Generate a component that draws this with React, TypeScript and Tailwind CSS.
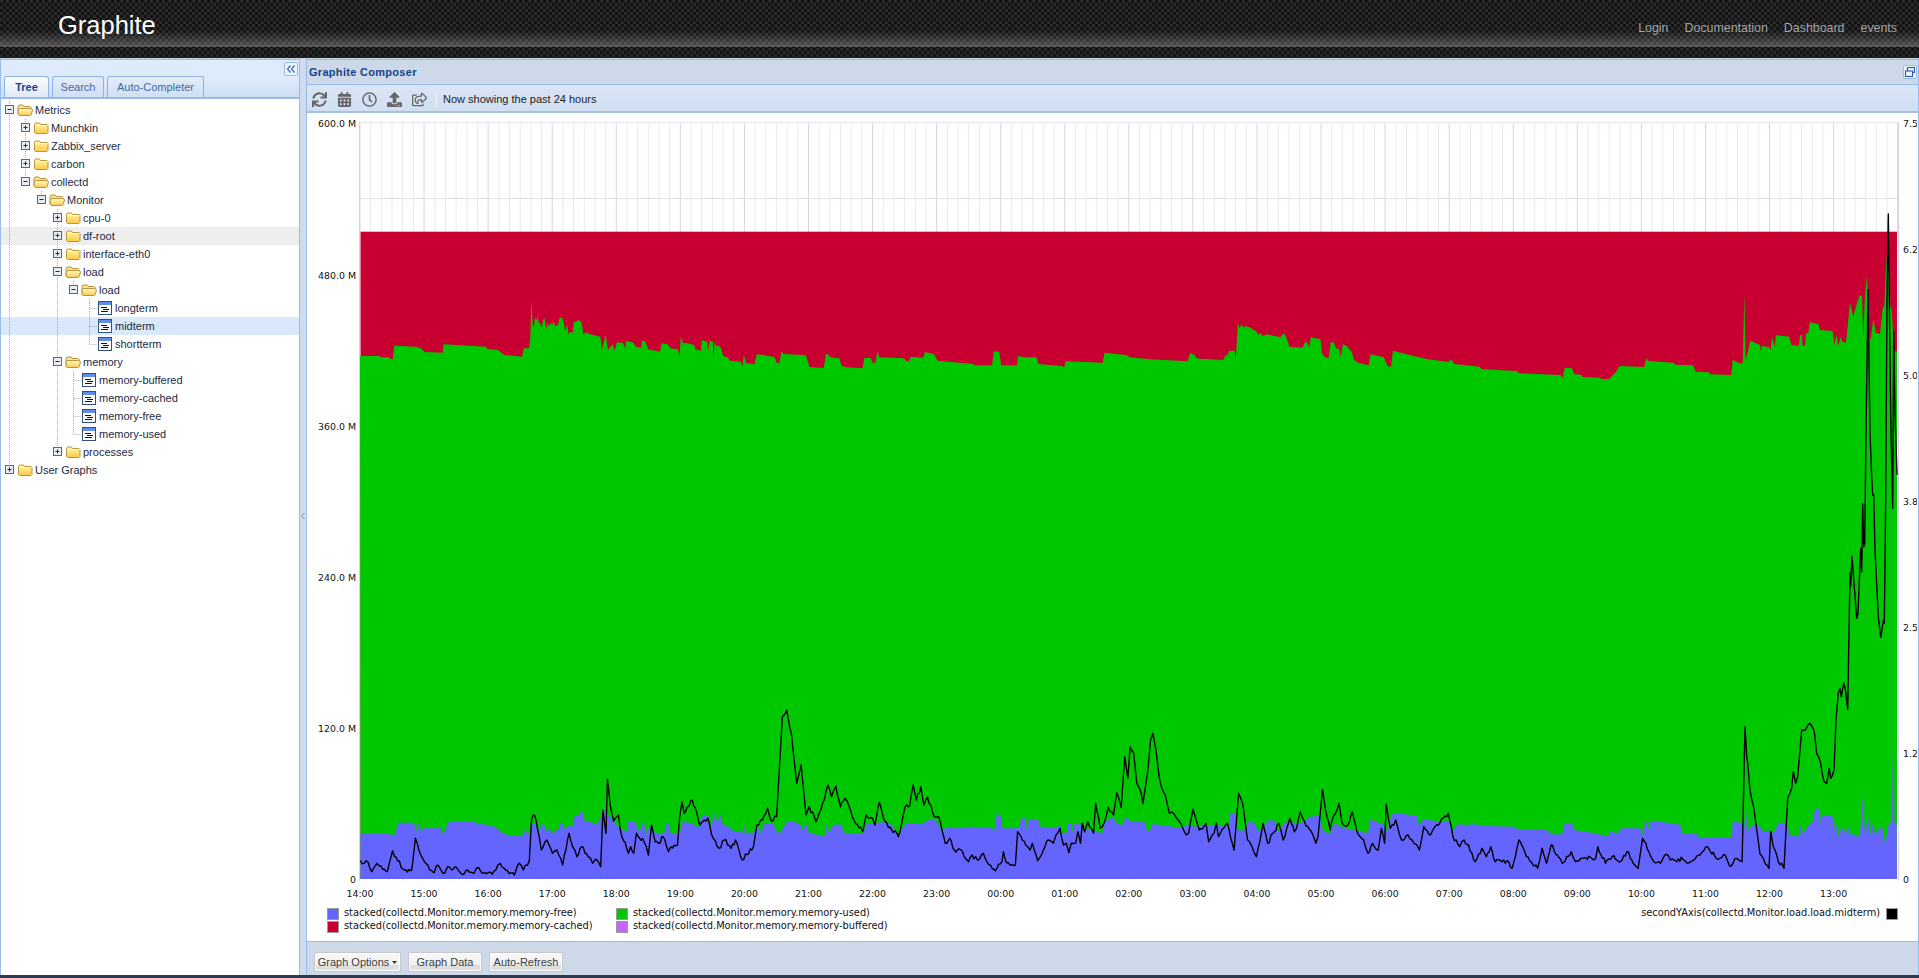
import React from "react";
import { FaSync, FaCalendarAlt, FaRegClock, FaUpload, FaRegShareSquare } from "react-icons/fa";

const conv = (a: number[], x0: number, sx: number, y0: number) => {
  const out: string[] = [];
  for (let i = 0; i < a.length; i += 2) out.push(`${(x0 + a[i] / sx).toFixed(1)},${(y0 + a[i + 1] / 3).toFixed(1)}`);
  return out;
};

const jag = (pts: string[]) => {
  const out: string[] = [];
  let n = 0;
  const p = pts.map((s) => s.split(",").map(Number));
  for (let i = 0; i < p.length - 1; i++) {
    const [x0, y0] = p[i];
    const [x1, y1] = p[i + 1];
    out.push(`${x0},${y0}`);
    const dx = x1 - x0;
    const steps = Math.floor(dx / 1.5);
    const steep = Math.abs(y1 - y0) / Math.max(dx, 0.1) > 6;
    if (steep) continue;
    for (let s = 1; s < steps; s++) {
      n++;
      const r = Math.sin(n * 12.9898) * 43758.5453;
      const f = r - Math.floor(r);
      const x = x0 + (dx * s) / steps;
      const y = y0 + ((y1 - y0) * s) / steps + (f - 0.5) * 4.6;
      out.push(`${x.toFixed(1)},${y.toFixed(1)}`);
    }
  }
  const last = p[p.length - 1];
  out.push(`${last[0]},${last[1]}`);
  return out;
};

const green11 = [12,78,70,78,75,82,100,82,104,87,110,87,115,47,178,50,195,55,205,66,260,68,263,43,390,50,395,57,425,60,445,75,498,80,503,55];
const green9 = [65,205,68,170,70,60,73,130,76,145,78,115,82,120,84,108,87,130,90,130,93,145,97,118,100,115,104,148,107,128,110,140,113,128,117,135,120,122,123,138,130,135,134,112,140,115,147,155,150,130,153,162,158,155,163,158,165,125,170,125,177,120,183,128,187,165,192,157,200,162,225,170,228,210,237,165,242,210,252,193,257,212,262,187,275,188,281,205,282,183,297,187,305,200,316,203,318,182,325,183,332,208,358,215,362,190,375,193,382,205,398,208,402,228,405,170,410,188,420,190,435,195,438,208,450,212,452,180,465,187,466,215,470,182,477,185,478,240,481,185,485,200,488,195,495,205,500,228,510,232,515,242,540,245,543,260,546,225,552,250,570,253,575,223,590,225,615,232,620,248,626,250,630,213,635,222,685,226,690,245,693,261,725,264,730,222,736,224,740,232,760,235,765,257,775,262,812,265,816,234,830,234,835,248,841,250,845,215,850,232,905,235,910,243,916,243,920,230,948,233,952,216,972,222,980,242,1060,252,1063,256,1102,256,1106,214,1118,215,1123,256,1158,256,1160,228,1175,232,1202,232,1206,252,1258,258,1264,262,1267,244,1350,248,1354,218,1405,226,1410,232,1455,238,1540,244,1546,220,1555,224,1560,234];
const green10 = [0,236,52,240,57,226,62,226,65,212,78,212,80,245,85,125,88,145,93,135,98,142,103,138,115,145,127,155,130,165,135,158,140,168,150,163,180,172,185,163,190,163,197,185,200,200,230,203,235,187,240,187,245,203,248,172,270,178,273,220,280,232,288,234,293,187,299,187,305,205,312,208,315,232,320,193,328,197,340,215,345,240,355,248,378,256,382,223,412,232,420,258,428,260,432,212,470,225,510,238,558,246,562,238,570,252,625,260,632,268,710,273,715,280,808,285,813,295,817,263,833,265,838,282,855,285,857,291,895,293,900,297,917,297,925,285,932,275,940,258,995,261,1000,235,1005,243,1060,248,1065,254,1105,256,1110,275,1140,277,1143,283,1190,285,1193,240];
const green12 = [0,490,8,490,13,285,17,480,25,450,30,422,60,435,63,455,66,437,88,442,92,450,96,410,104,440,108,406,148,410,154,435,177,437,180,405,185,405,188,437,195,437,198,400,205,400,209,367,235,372,240,390,278,393,283,435,289,405,295,437,302,410,307,425,318,428,330,308,340,350,348,320,358,287,366,287,370,410,375,285,381,228,386,400,392,420,400,358,408,398,420,402,428,325,433,318,438,205,445,100,450,315,455,330,462,452,471,455];
const greenTop = [...conv(green11, 356, 3, 330), ...conv(green9, 500, 2.24, 280), ...conv(green10, 1200, 2.24, 280), ...conv(green12, 1740, 3, 200)];

const blue7 = [0,402,30,398,65,402,75,407,82,385,85,368,120,368,124,400,128,372,133,372,135,398,140,385,180,385,185,405,195,370,200,366,258,366,262,375,268,371,285,375,300,380,320,400,335,407,365,408,368,385,375,405,380,385,385,370,395,375,400,395,405,375,410,368,415,395,422,385,430,400,445,385,450,362,458,390,465,375,475,380,480,345,490,345,495,328,503,365,515,365,530,375,545,330,580,385,597,395,600,362,615,365,625,400,633,360,640,400,650,375,660,400,680,402,685,372,690,372,695,402,715,400,722,365,745,370,755,385,768,342,780,350,785,385,792,340,800,370,805,340,812,375,825,380,835,393,858,398,860,375,863,398,880,398,890,375,895,402,905,372,925,372,932,395,940,400,955,365,975,367,985,375,990,390,997,368,1005,400,1040,408,1043,375,1050,400,1058,375,1075,373,1085,400,1125,400,1135,370,1175,367,1190,375,1205,405,1222,370,1255,373,1280,355,1290,365,1305,395,1310,382,1345,382,1365,380,1415,382,1418,408,1425,342,1433,345,1438,385,1475,385,1480,355,1490,355,1492,390,1497,358,1518,360,1522,380,1560,382];
const blue8 = [0,375,5,398,15,398,17,372,25,372,28,398,32,372,45,372,50,385,95,400,100,365,120,352,128,372,140,375,146,352,160,365,190,367,195,392,200,397,207,372,240,378,270,383,295,372,300,385,310,375,355,375,378,380,380,340,392,342,395,385,410,395,422,365,435,368,445,395,468,360,480,362,490,395,505,365,540,370,560,350,580,347,590,395,605,400,615,370,630,382,665,393,690,400,695,358,715,370,725,370,730,398,745,340,770,342,800,348,803,375,815,357,850,365,870,362,880,395,890,372,910,375,925,373,960,378,1020,380,1025,390,1085,390,1095,392,1100,403,1125,403,1130,372,1148,372,1150,390,1180,395,1205,403,1230,408,1232,395,1250,400,1258,385,1300,385,1305,405,1312,358,1320,392,1322,365,1345,365,1390,375,1392,400,1425,400,1430,412,1505,412];
const blue6 = [518,362,548,372,552,392,558,332,565,392,580,372,600,378,605,392,635,392,640,402,655,368,680,368,690,405,715,410,722,375,728,403,745,378,750,370,760,365,765,325,778,327,782,370,787,345,820,350,825,400,830,370,835,410,845,380,858,405,862,370,870,405,880,400,888,410,900,405,908,290,915,405,925,350,930,405,938,370,945,405,965,375,975,432,987,370,995,365,1000,80,1003,365,1010,375];
const blueTop = [...conv(blue7, 360.5, 2.24, 700), ...conv(blue8, 1060, 2.24, 700), ...conv(blue6, 1560, 3, 700)];

const black7 = [0,482,8,490,13,482,25,515,37,490,50,508,60,515,66,482,72,452,80,472,98,510,115,510,123,415,135,465,155,510,165,518,170,497,185,520,195,500,205,510,215,502,225,520,240,510,250,518,265,503,275,520,295,523,303,510,313,490,325,510,345,525,355,490,365,510,378,483,383,360,390,345,397,390,405,450,417,420,430,460,440,450,453,495,460,450,467,400,475,440,485,470,495,440,510,470,520,490,530,480,538,500,543,330,550,400,553,238,560,320,567,363,578,345,582,390,600,460,605,440,612,460,618,400,635,425,645,465,652,375,660,425,668,430,678,410,690,455,695,440,710,435,715,350,720,305,725,340,732,320,743,300,760,375,770,360,778,355,790,415,803,445,815,420,830,445,840,420,855,480,880,440,888,375,900,360,912,325,920,362,932,350,945,50,955,30,965,100,977,250,987,195,998,345,1005,320,1020,365,1035,310,1047,255,1055,290,1065,258,1075,320,1085,295,1095,320,1105,360,1125,395,1132,345,1147,355,1152,375,1162,307,1175,365,1205,410,1220,320,1230,318,1238,255,1245,300,1255,260,1262,315,1270,292,1285,350,1295,350,1310,430,1320,415,1330,450,1345,450,1362,485,1370,465,1382,480,1395,460,1405,490,1422,512,1437,485,1440,455,1447,488,1467,495,1472,395,1490,435,1500,450,1505,430,1517,482,1530,450,1540,420,1552,430,1558,405];
const black8 = [0,385,8,435,14,430,20,458,25,430,35,430,40,395,46,430,50,370,55,395,62,365,75,400,80,310,90,385,95,380,108,322,120,345,127,278,137,322,145,170,152,235,157,140,165,160,172,250,178,265,186,310,197,210,203,120,208,100,215,150,222,230,240,310,245,340,255,340,265,360,275,385,283,405,288,400,298,328,305,360,312,390,322,380,327,370,333,425,345,400,350,370,355,410,375,370,390,450,400,280,410,315,420,420,430,440,440,470,455,370,465,430,480,395,490,370,500,420,515,355,525,395,530,385,538,335,548,365,565,400,573,430,578,410,588,270,598,350,605,390,612,350,625,310,632,370,645,375,655,335,665,395,680,420,690,460,700,430,713,450,720,385,727,430,731,312,740,385,752,360,765,420,780,405,805,450,815,380,830,405,840,380,870,340,880,410,895,440,905,420,915,435,930,485,945,445,955,470,965,440,975,485,990,485,1005,485,1013,505,1028,420,1045,470,1070,505,1080,445,1090,490,1100,435,1125,490,1145,455,1155,485,1170,475,1200,475,1205,440,1222,490,1237,470,1255,485,1270,455,1295,505,1305,415,1330,485,1345,490,1355,465,1375,480,1395,478,1405,490,1430,465,1450,440,1470,475,1490,465,1500,498,1515,475,1528,485];
const black6 = [555,80,560,170,563,190,570,270,580,315,585,350,600,462,610,475,627,505,632,395,640,440,645,450,655,485,665,490,672,505,683,295,695,265,700,215,707,250,713,230,725,90,735,90,750,70,763,95,770,160,782,190,792,245,800,250,808,205,812,235,822,210,828,60];
const black12 = [295,1480,300,1465,304,1490,311,1450,316,1465,323,1528,330,1120,332,1160,336,1068,343,1160,350,1255,354,1240,362,1045,365,1115,368,912,371,1040,374,1030,378,700,384,270,390,700,395,830,398,885,401,885,405,1050,415,1250,422,1312,430,1262,433,1270,437,900,441,300,445,42,449,400,453,700,458,925,461,395,465,640,471,825];
const blackLine = jag([...conv(black7, 360.5, 2.24, 700), ...conv(black8, 1060, 2.24, 700), ...conv(black6, 1560, 3, 700), ...conv(black12, 1740, 3, 200)]);

const HOUR = 64.07;
const hours = ["14:00","15:00","16:00","17:00","18:00","19:00","20:00","21:00","22:00","23:00","00:00","01:00","02:00","03:00","04:00","05:00","06:00","07:00","08:00","09:00","10:00","11:00","12:00","13:00"];
const leftLabels: [string, number][] = [["600.0 M",123],["480.0 M",275],["360.0 M",426],["240.0 M",577],["120.0 M",728],["0",879]];
const rightLabels: [string, number][] = [["7.5",123],["6.2",249],["5.0",375],["3.8",501],["2.5",627],["1.2",753],["0",879]];

function Chart() {
  const minors: number[] = [];
  for (let i = 0; i <= 144; i++) minors.push(360 + (i * HOUR) / 6);
  return (
    <svg width={1610} height={794} viewBox="307 113 1610 794" className="block shrink-0">
      {minors.map((x, i) => (
        <line key={i} x1={x} x2={x} y1={122} y2={232} stroke={i % 6 === 0 ? "#e2cfe2" : "#eee8ee"} strokeWidth={1} />
      ))}
      <line x1={360} x2={1898} y1={122.5} y2={122.5} stroke="#f2e6f2" strokeWidth={1.5} />
      <line x1={360} x2={1898} y1={198.5} y2={198.5} stroke="#e6dde6" />
      <line x1={359.5} x2={359.5} y1={122} y2={880} stroke="#e0cce0" />
      <line x1={1898.5} x2={1898.5} y1={122} y2={880} stroke="#e0cce0" />
      <rect x={360.5} y={231.7} width={1536.5} height={647.3} fill="#c80032" />
      <polygon points={[ "360.5,879", ...greenTop, "1897,879"].join(" ")} fill="#00c800" />
      <polygon points={[ "360.5,879", ...blueTop, "1897,879"].join(" ")} fill="#6464ff" />
      <polyline points={blackLine.join(" ")} fill="none" stroke="#000" strokeWidth={1.4} strokeLinejoin="round" />
      <g fontFamily="'DejaVu Sans',sans-serif" fontSize={9.4} fill="#111">
        {leftLabels.map(([t, y]) => (
          <text key={t} x={356} y={y + 3.5} textAnchor="end">{t}</text>
        ))}
        {rightLabels.map(([t, y]) => (
          <text key={t} x={1903} y={y + 3.5}>{t}</text>
        ))}
        {hours.map((t, i) => (
          <text key={t} x={360 + i * HOUR} y={896.5} textAnchor="middle">{t}</text>
        ))}
      </g>
    </svg>
  );
}

const Legend = ({ color, text, right }: { color: string; text: string; right?: boolean }) => (
  <div className={`flex items-center h-[13px] ${right ? "flex-row-reverse" : ""}`}>
    <span className="w-3 h-3 border border-[#999] shrink-0" style={{ background: color }} />
    <span className={`text-[9.8px] text-[#111] whitespace-nowrap [font-family:'DejaVu_Sans',sans-serif] ${right ? "mr-[6px]" : "ml-[5px]"}`}>{text}</span>
  </div>
);

function Folder({ open }: { open?: boolean }) {
  return open ? (
    <svg width={16} height={16} viewBox="0 0 16 16" className="shrink-0">
      <defs>
        <linearGradient id="fo" x1="0" y1="0" x2="0" y2="1">
          <stop offset="0" stopColor="#fff8c8" />
          <stop offset="1" stopColor="#f9cb50" />
        </linearGradient>
      </defs>
      <path d="M1 12V4.5L2 3h4l1 1.5h6l1 1V8" fill="#fbe593" stroke="#b8953e" strokeWidth={1} />
      <path d="M1.2 8.2Q1.2 6.5 3 6.5h9.5Q15.5 6.5 15.5 8l-1.2 4.3q-.4 1.2-1.8 1.2H3q-1.8 0-1.8-1.8z" fill="url(#fo)" stroke="#b8953e" strokeWidth={1} strokeLinejoin="round" />
    </svg>
  ) : (
    <svg width={16} height={16} viewBox="0 0 16 16" className="shrink-0">
      <defs>
        <linearGradient id="fc" x1="0" y1="0" x2="0" y2="1">
          <stop offset="0" stopColor="#fff4a8" />
          <stop offset="1" stopColor="#fbcb48" />
        </linearGradient>
      </defs>
      <path d="M1.5 4.5L2.5 3h4l1 1.5H14l1 1v7l-1 1H2.5l-1-1z" fill="url(#fc)" stroke="#b8953e" strokeWidth={1} strokeLinejoin="round" />
      <path d="M2.5 5.5h11.5" stroke="#fffbe0" strokeWidth={1} />
    </svg>
  );
}

const Leaf = () => (
  <svg width={16} height={16} viewBox="0 0 16 16" className="shrink-0">
    <rect x={1.5} y={1.5} width={13} height={13} fill="#fff" stroke="#34507e" />
    <rect x={2} y={2} width={12} height={3} fill="#5f8fe8" />
    <path d="M4 7.5h6M6 9.5h6M4 11.5h7" stroke="#111" strokeWidth={1} />
  </svg>
);

function Elbow({ kind, exp }: { kind: "m" | "e"; exp?: "+" | "-" }) {
  return (
    <svg width={16} height={18} viewBox="0 0 16 18" className="shrink-0">
      <g stroke="#aaa" strokeDasharray="1 1" fill="none">
        <line x1={8.5} x2={8.5} y1={0} y2={kind === "m" ? 18 : 9} />
        {!exp && <line x1={8.5} x2={16} y1={9.5} y2={9.5} />}
      </g>
      {exp && (
        <>
          <rect x={4.5} y={4.5} width={8} height={8} fill="#e6edf5" stroke="#4d6a8e" />
          <path d={exp === "+" ? "M6.5 8.5h4M8.5 6.5v4" : "M6.5 8.5h4"} stroke="#1c2f4c" strokeWidth={1} />
        </>
      )}
    </svg>
  );
}

const Guide = ({ on }: { on: boolean }) => (
  <svg width={16} height={18} viewBox="0 0 16 18" className="shrink-0">
    {on && <line x1={8.5} x2={8.5} y1={0} y2={18} stroke="#aaa" strokeDasharray="1 1" />}
  </svg>
);

type Row = { t: string; p: string; k: "m" | "e"; x?: "+" | "-"; i: "c" | "o" | "l"; bg?: string };
const rows: Row[] = [
  { t: "Metrics", p: "", k: "m", x: "-", i: "o" },
  { t: "Munchkin", p: "T", k: "m", x: "+", i: "c" },
  { t: "Zabbix_server", p: "T", k: "m", x: "+", i: "c" },
  { t: "carbon", p: "T", k: "m", x: "+", i: "c" },
  { t: "collectd", p: "T", k: "e", x: "-", i: "o" },
  { t: "Monitor", p: "TF", k: "e", x: "-", i: "o" },
  { t: "cpu-0", p: "TFF", k: "m", x: "+", i: "c" },
  { t: "df-root", p: "TFF", k: "m", x: "+", i: "c", bg: "bg-[#eeeeee]" },
  { t: "interface-eth0", p: "TFF", k: "m", x: "+", i: "c" },
  { t: "load", p: "TFF", k: "m", x: "-", i: "o" },
  { t: "load", p: "TFFT", k: "e", x: "-", i: "o" },
  { t: "longterm", p: "TFFTF", k: "m", i: "l" },
  { t: "midterm", p: "TFFTF", k: "m", i: "l", bg: "bg-[#d9e8fb]" },
  { t: "shortterm", p: "TFFTF", k: "e", i: "l" },
  { t: "memory", p: "TFF", k: "m", x: "-", i: "o" },
  { t: "memory-buffered", p: "TFFT", k: "m", i: "l" },
  { t: "memory-cached", p: "TFFT", k: "m", i: "l" },
  { t: "memory-free", p: "TFFT", k: "m", i: "l" },
  { t: "memory-used", p: "TFFT", k: "e", i: "l" },
  { t: "processes", p: "TFF", k: "e", x: "+", i: "c" },
  { t: "User Graphs", p: "", k: "e", x: "+", i: "c" },
];

const Tab = ({ label, active, w }: { label: string; active?: boolean; w: string }) => (
  <div
    className={`${w} h-[21px] flex items-center justify-center rounded-t-[3px] border border-b-0 border-[#8db2e3] text-[11px] ${
      active ? "font-bold text-[#15428b] bg-gradient-to-b from-[#fbfdff] to-[#dfe9f7]" : "text-[#416aa3] bg-gradient-to-b from-[#e4edf9] to-[#cfdff3]"
    }`}
  >
    {label}
  </div>
);

const Btn = ({ children, w }: { children: React.ReactNode; w: string }) => (
  <div className={`${w} h-[20px] flex items-center justify-center gap-[3px] rounded-[2px] border border-[#c4c8cc] text-[11px] text-[#3c3c3c] bg-[linear-gradient(to_bottom,#f7f7f7_0,#f2f2f2_65%,#dcdcdc_65%,#e2e2e2_100%)] shadow-[inset_0_0_0_1px_#fff]`}>
    {children}
  </div>
);

const ToolIcon = ({ children, w }: { children: React.ReactNode; w: string }) => (
  <div className={`${w} flex justify-center text-[#666] text-[15px]`}>{children}</div>
);

export default function App() {
  return (
    <div className="w-[1919px] h-[978px] overflow-hidden flex flex-col bg-[#2b3a4e] [font-family:'Liberation_Sans',Arial,sans-serif]">
      <header className="h-[58px] shrink-0 flex items-start justify-between [background-image:linear-gradient(to_bottom,transparent_0,transparent_30px,rgba(255,255,255,0.05)_34px,rgba(255,255,255,0.27)_47px,transparent_47.5px),repeating-conic-gradient(#121212_0_25%,#2a2a2a_0_50%)] [background-size:100%_100%,6px_6px]">
        <div className="ml-[58px] mt-[9px] text-[25.5px] leading-[32px] text-white">Graphite</div>
        <nav className="flex gap-[16px] mr-[22px] mt-[20px] text-[12.4px] leading-[16px] text-[#a6a6a6]">
          <span>Login</span>
          <span>Documentation</span>
          <span>Dashboard</span>
          <span>events</span>
        </nav>
      </header>
      <main className="flex h-[917px] shrink-0 bg-[#cfdcee] border-t border-[#c9d3de]">
        <aside className="w-[300px] shrink-0 flex flex-col border-x border-t border-[#99bbe8] bg-white">
          <div className="h-[39px] shrink-0 relative bg-gradient-to-b from-[#deebfb] via-[#deebfb] to-[#cddef3] border-b-2 border-[#99bbe8]">
            <div className="absolute right-[1px] top-[2px] w-[14px] h-[14px] rounded-[2px] border border-[#99bbe8] bg-[#eaf2fc] flex items-center justify-center">
              <svg width={10} height={8} viewBox="0 0 10 8" fill="none" stroke="#3f68a8" strokeWidth={1.2}>
                <path d="M4.5 0.5L1.5 4l3 3.5M8.5 0.5L5.5 4l3 3.5" />
              </svg>
            </div>
            <div className="absolute left-[3px] bottom-0 flex gap-[3px]">
              <Tab label="Tree" active w="w-[45px]" />
              <Tab label="Search" w="w-[52px]" />
              <Tab label="Auto-Completer" w="w-[97px]" />
            </div>
          </div>
          <div className="pt-[2px] text-[11px] text-[#1c2a40]">
            {rows.map((r, n) => (
              <div key={n} className={`h-[18px] flex items-center ${r.bg ?? ""}`}>
                {r.p.split("").map((c, j) => (
                  <Guide key={j} on={c === "T"} />
                ))}
                <Elbow kind={r.k} exp={r.x} />
                {r.i === "l" ? <Leaf /> : <Folder open={r.i === "o"} />}
                <span className="ml-[2px] whitespace-nowrap">{r.t}</span>
              </div>
            ))}
          </div>
        </aside>
        <div className="w-[6px] shrink-0 flex items-center justify-center">
          <svg width={4} height={8} viewBox="0 0 4 8" className="mb-[2px]">
            <path d="M3.5 1L0.5 4l3 3" fill="none" stroke="#7d8ea3" />
          </svg>
        </div>
        <section className="flex-1 min-w-0 flex flex-col border-x border-t border-[#99bbe8]">
          <div className="h-[25px] shrink-0 flex items-center justify-between pl-[2px] pr-[1px] bg-[#cdd9e8] border-b border-[#99bbe8]">
            <span className="text-[11px] font-bold tracking-[0.3px] text-[#15428b]">Graphite Composer</span>
            <div className="w-[14px] h-[14px] rounded-[2px] border border-[#99bbe8] bg-[#eaf2fc] flex items-center justify-center">
              <svg width={10} height={10} viewBox="0 0 10 10" fill="none" stroke="#2a56a8" strokeWidth={1.1}>
                <rect x={2.5} y={0.5} width={7} height={5} />
                <rect x={0.5} y={4} width={7} height={5.5} fill="#eaf2fc" />
              </svg>
            </div>
          </div>
          <div className="h-[28px] shrink-0 flex items-center pl-[5px] pt-[2px] bg-gradient-to-b from-[#d9e6f7] to-[#d0dff2] border-b-2 border-[#a6c0e4]">
            <div className="flex gap-[10px]">
              <ToolIcon w="w-[15px]"><FaSync /></ToolIcon>
              <ToolIcon w="w-[15px]"><FaCalendarAlt /></ToolIcon>
              <ToolIcon w="w-[15px]"><FaRegClock /></ToolIcon>
              <ToolIcon w="w-[15px]"><FaUpload /></ToolIcon>
              <ToolIcon w="w-[15px]"><FaRegShareSquare /></ToolIcon>
            </div>
            <div className="w-px h-[16px] bg-[#f2f7fd] ml-[9px] mr-[6px]" />
            <span className="text-[11px] text-[#222]">Now showing the past 24 hours</span>
          </div>
          <div className="h-[829px] shrink-0 bg-white border-b border-[#99bbe8] flex flex-col">
            <Chart />
            <div className="flex justify-between pl-[20px] pr-[20px]">
              <div className="flex gap-[20px]">
                <div className="w-[269px]">
                  <Legend color="#6464ff" text="stacked(collectd.Monitor.memory.memory-free)" />
                  <Legend color="#c80032" text="stacked(collectd.Monitor.memory.memory-cached)" />
                </div>
                <div>
                  <Legend color="#00c800" text="stacked(collectd.Monitor.memory.memory-used)" />
                  <Legend color="#c864ff" text="stacked(collectd.Monitor.memory.memory-buffered)" />
                </div>
              </div>
              <div>
                <Legend right color="#000" text="secondYAxis(collectd.Monitor.load.load.midterm)" />
              </div>
            </div>
          </div>
          <div className="flex-1 flex gap-[7px] pl-[7px] pt-[10px] bg-[#cdd9e8]">
            <Btn w="w-[87px]">
              Graph Options
              <svg width={5} height={3} viewBox="0 0 5 3"><path d="M0 0h5L2.5 3z" fill="#333" /></svg>
            </Btn>
            <Btn w="w-[74px]">Graph Data</Btn>
            <Btn w="w-[74px]">Auto-Refresh</Btn>
          </div>
        </section>
      </main>
    </div>
  );
}
